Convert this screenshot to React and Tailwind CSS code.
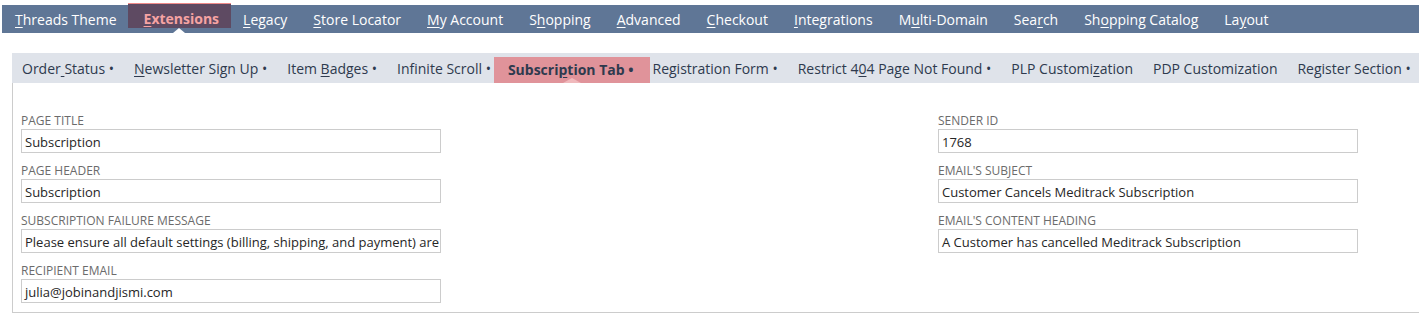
import React from "react";

const U = ({ children }) => <span className="underline underline-offset-[2px]">{children}</span>;

const topItems = [
  [<><U>T</U>hreads Theme</>],
  [<><U>E</U>xtensions</>, true],
  [<><U>L</U>egacy</>],
  [<><U>S</U>tore Locator</>],
  [<><U>M</U>y Account</>],
  [<>S<U>h</U>opping</>],
  [<><U>A</U>dvanced</>],
  [<><U>C</U>heckout</>],
  [<><U>I</U>ntegrations</>],
  [<>M<U>u</U>lti-Domain</>],
  [<>Sea<U>r</U>ch</>],
  [<>Sh<U>o</U>pping Catalog</>],
  [<>La<U>y</U>out</>],
];

const subItems = [
  [<>Order<U> </U>Status •</>],
  [<><U>N</U>ewsletter Sign Up •</>],
  [<>Item <U>B</U>adges •</>],
  [<>Infinite Scroll •</>],
  [<>Subscri<U>p</U>tion Tab •</>, true],
  [<>Registration Form •</>],
  [<>Restrict 4<U>0</U>4 Page Not Found •</>],
  [<>PLP Customi<U>z</U>ation</>],
  [<>PDP Customization</>],
  [<>Register Section •</>],
];

function Field({ label, value }) {
  return (
    <div className="pt-[9px]">
      <div className="h-[17px] text-[12px] leading-[17px] uppercase text-[#6b6b6b]">{label}</div>
      <div className="h-[24px] w-[420px] border border-[#cccccc] bg-white pl-[3px] pt-[1px] text-[13px] leading-[22px] text-[#262626] whitespace-nowrap overflow-hidden">
        {value}
      </div>
    </div>
  );
}

export default function App() {
  return (
    <div className="min-h-[322px] overflow-hidden bg-white pt-[5px] font-['Open_Sans',sans-serif]">
      <div className="ml-[2px] flex h-[28px] bg-[#5f7696] text-[14px] text-white">
        {topItems.map(([label, active], i) =>
          active ? (
            <div
              key={i}
              className="relative mt-[-2px] ml-[-2px] mr-[-1px] h-[25px] border-t border-[#f08a8a] bg-[#5e4a62] pl-[16px] pr-[12px] pt-[1px] font-bold leading-[27px] text-[#f6a3a3]"
            >
              {label}
              <span className="absolute left-1/2 top-[24px] h-0 w-0 -translate-x-1/2 border-x-[6px] border-b-[5px] border-x-transparent border-b-white" />
            </div>
          ) : (
            <div key={i} className="px-[13px] leading-[29px] whitespace-nowrap">
              {label}
            </div>
          )
        )}
      </div>

      <div className="ml-[12px] mt-[20px] flex h-[30px] items-end bg-[#dfe3ea] text-[14px] text-[#2e3a4e]">
        {subItems.map(([label, active], i) =>
          active ? (
            <div
              key={i}
              className="relative ml-[-7px] mr-[-7px] h-[26px] bg-[#e0939a] pl-[14px] pr-[16px] font-bold leading-[25px] whitespace-nowrap"
            >
              {label}
              <span className="absolute left-1/2 bottom-0 h-0 w-0 -translate-x-1/2 border-x-[9px] border-b-[5px] border-x-transparent border-b-[#f0b9bc]" />
            </div>
          ) : (
            <div key={i} className="h-[30px] px-[10px] leading-[31px] whitespace-nowrap">
              {label}
            </div>
          )
        )}
      </div>

      <div className="ml-[12px] flex border-b border-l border-[#cccccc] pb-[9px] pl-[8px] pt-[20px]">
        <div className="w-[420px] shrink-0">
          <Field label="Page Title" value="Subscription" />
          <Field label="Page Header" value="Subscription" />
          <Field
            label="Subscription Failure Message"
            value="Please ensure all default settings (billing, shipping, and payment) are configured"
          />
          <Field label="Recipient Email" value="julia@jobinandjismi.com" />
        </div>
        <div className="ml-[497px] w-[420px] shrink-0">
          <Field label="Sender ID" value="1768" />
          <Field label="Email's Subject" value="Customer Cancels Meditrack Subscription" />
          <Field label="Email's Content Heading" value="A Customer has cancelled Meditrack Subscription" />
        </div>
      </div>
    </div>
  );
}
